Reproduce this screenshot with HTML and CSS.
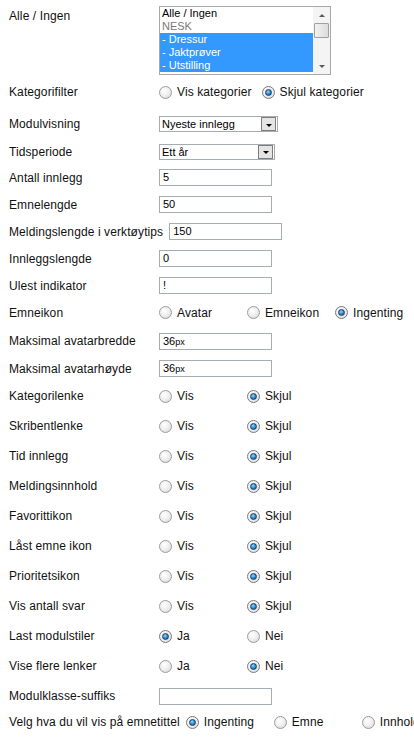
FILE: index.html
```html
<!DOCTYPE html>
<html lang="no">
<head>
<meta charset="utf-8">
<title>Modulinnstillinger</title>
<link rel="stylesheet" href="styles.css">
</head>
<body>
<div class="form">
  <div class="row row-list">
    <div class="label label-top">Alle / Ingen</div>
    <div class="listbox">
      <div class="options">
        <div class="opt">Alle / Ingen</div>
        <div class="opt opt-group">NESK</div>
        <div class="opt opt-sel">- Dressur</div>
        <div class="opt opt-sel">- Jaktprøver</div>
        <div class="opt opt-sel">- Utstilling</div>
      </div>
      <div class="scrollbar">
        <div class="sb-up"></div>
        <div class="sb-thumb"></div>
        <div class="sb-down"></div>
      </div>
    </div>
  </div>

  <div class="row h34">
    <div class="label">Kategorifilter</div>
    <label class="choice"><span class="radio"></span>Vis kategorier</label>
    <label class="choice"><span class="radio checked"></span>Skjul kategorier</label>
  </div>

  <div class="row h30">
    <div class="label">Modulvisning</div>
    <div class="select select-wide"><span class="select-text">Nyeste innlegg</span><span class="select-btn"></span></div>
  </div>

  <div class="row h25">
    <div class="label">Tidsperiode</div>
    <div class="select select-mid"><span class="select-text">Ett år</span><span class="select-btn"></span></div>
  </div>

  <div class="row h27">
    <div class="label">Antall innlegg</div>
    <div class="input">5</div>
  </div>

  <div class="row h27">
    <div class="label">Emnelengde</div>
    <div class="input">50</div>
  </div>

  <div class="row h27">
    <div class="label">Meldingslengde i verktøytips</div>
    <div class="input">150</div>
  </div>

  <div class="row h27">
    <div class="label">Innleggslengde</div>
    <div class="input">0</div>
  </div>

  <div class="row h27">
    <div class="label">Ulest indikator</div>
    <div class="input">!</div>
  </div>

  <div class="row h27">
    <div class="label">Emneikon</div>
    <label class="choice"><span class="radio"></span>Avatar</label>
    <label class="choice"><span class="radio"></span>Emneikon</label>
    <label class="choice"><span class="radio checked"></span>Ingenting</label>
  </div>

  <div class="row h30">
    <div class="label">Maksimal avatarbredde</div>
    <div class="input">36<span class="unit">px</span></div>
  </div>

  <div class="row h25">
    <div class="label">Maksimal avatarhøyde</div>
    <div class="input">36<span class="unit">px</span></div>
  </div>

  <div class="row h30">
    <div class="label">Kategorilenke</div>
    <label class="choice"><span class="radio"></span>Vis</label>
    <label class="choice"><span class="radio checked"></span>Skjul</label>
  </div>
  <div class="row h30">
    <div class="label">Skribentlenke</div>
    <label class="choice"><span class="radio"></span>Vis</label>
    <label class="choice"><span class="radio checked"></span>Skjul</label>
  </div>
  <div class="row h30">
    <div class="label">Tid innlegg</div>
    <label class="choice"><span class="radio"></span>Vis</label>
    <label class="choice"><span class="radio checked"></span>Skjul</label>
  </div>
  <div class="row h30">
    <div class="label">Meldingsinnhold</div>
    <label class="choice"><span class="radio"></span>Vis</label>
    <label class="choice"><span class="radio checked"></span>Skjul</label>
  </div>
  <div class="row h30">
    <div class="label">Favorittikon</div>
    <label class="choice"><span class="radio"></span>Vis</label>
    <label class="choice"><span class="radio checked"></span>Skjul</label>
  </div>
  <div class="row h30">
    <div class="label">Låst emne ikon</div>
    <label class="choice"><span class="radio"></span>Vis</label>
    <label class="choice"><span class="radio checked"></span>Skjul</label>
  </div>
  <div class="row h30">
    <div class="label">Prioritetsikon</div>
    <label class="choice"><span class="radio"></span>Vis</label>
    <label class="choice"><span class="radio checked"></span>Skjul</label>
  </div>
  <div class="row h30">
    <div class="label">Vis antall svar</div>
    <label class="choice"><span class="radio"></span>Vis</label>
    <label class="choice"><span class="radio checked"></span>Skjul</label>
  </div>
  <div class="row h30">
    <div class="label">Last modulstiler</div>
    <label class="choice"><span class="radio checked"></span>Ja</label>
    <label class="choice"><span class="radio"></span>Nei</label>
  </div>
  <div class="row h30">
    <div class="label">Vise flere lenker</div>
    <label class="choice"><span class="radio"></span>Ja</label>
    <label class="choice"><span class="radio checked"></span>Nei</label>
  </div>

  <div class="row h30">
    <div class="label">Modulklasse-suffiks</div>
    <div class="input"></div>
  </div>

  <div class="row h22">
    <div class="label">Velg hva du vil vis på emnetittel</div>
    <label class="choice"><span class="radio checked"></span>Ingenting</label>
    <label class="choice"><span class="radio"></span>Emne</label>
    <label class="choice"><span class="radio"></span>Innhold</label>
  </div>
</div>
</body>
</html>
```

FILE: styles.css
```css
html, body {
  margin: 0;
  padding: 0;
  background: #ffffff;
  overflow: hidden;
}

body {
  font-family: "Liberation Sans", Arial, sans-serif;
  font-size: 12px;
  color: #111111;
}

.form {
  padding: 6px 0 0 9px;
  width: 700px;
}

.row {
  display: flex;
  align-items: center;
  white-space: nowrap;
}

.row-list {
  align-items: flex-start;
  height: 69px;
}

.h34 { height: 34px; }
.h30 { height: 30px; }
.h27 { height: 27px; }
.h25 { height: 25px; }
.h22 { height: 22px; }

.label {
  min-width: 144px;
  padding-right: 6px;
  flex-shrink: 0;
  line-height: 14px;
  letter-spacing: 0.1px;
}

.label-top {
  padding-top: 3px;
}

/* list box */
.listbox {
  display: flex;
  width: 170px;
  height: 67px;
  border: 1px solid #a9a9a9;
  background: #ffffff;
}

.options {
  flex: 1;
  font-size: 11px;
}

.opt {
  height: 13px;
  line-height: 13px;
  padding-left: 2px;
  color: #000000;
}

.opt-group {
  color: #7a7a7a;
}

.opt-sel {
  background: #3399ff;
  color: #ffffff;
}

.scrollbar {
  width: 17px;
  display: flex;
  flex-direction: column;
  align-items: center;
  background: #f4f4f4;
}

.sb-up, .sb-down {
  width: 0;
  height: 0;
  border-left: 3px solid transparent;
  border-right: 3px solid transparent;
}

.sb-up {
  margin-top: 7px;
  border-bottom: 3px solid #5a5a5a;
}

.sb-thumb {
  margin-top: 6px;
  width: 13px;
  height: 13px;
  border: 1px solid #a0a0a0;
  border-radius: 1px;
  background: linear-gradient(to right, #f2f2f2, #dcdcdc);
}

.sb-down {
  margin-top: auto;
  margin-bottom: 6px;
  border-top: 3px solid #5a5a5a;
}

/* selects */
.select {
  display: flex;
  align-items: center;
  height: 14px;
  border: 1px solid #a5acb2;
  background: #ffffff;
  font-size: 11px;
  color: #000000;
  padding: 0 1px 0 2px;
}

.select-wide { width: 114px; }
.select-mid { width: 111px; }

.select-text {
  flex: 1;
}

.select-btn {
  width: 13px;
  height: 12px;
  border: 1px solid #7d7d7d;
  background: #e4e4e4;
  display: flex;
  align-items: center;
  justify-content: center;
}

.select-btn::after {
  content: "";
  width: 0;
  height: 0;
  margin-top: 2px;
  border-left: 3px solid transparent;
  border-right: 3px solid transparent;
  border-top: 3px solid #000000;
}

/* text inputs */
.input {
  width: 108px;
  height: 15px;
  line-height: 15px;
  border: 1px solid #a5acb2;
  background: #ffffff;
  font-size: 11px;
  color: #000000;
  padding-left: 3px;
}

.unit {
  font-size: 9px;
}

/* radios */
.choice {
  display: flex;
  align-items: center;
  min-width: 88px;
  padding-right: 10px;
  box-sizing: border-box;
  flex-shrink: 0;
  letter-spacing: 0.1px;
}

.radio {
  position: relative;
  width: 11px;
  height: 11px;
  border: 1px solid #9c9c9c;
  border-radius: 50%;
  background: radial-gradient(circle at 40% 35%, #ffffff 0%, #ececec 55%, #cfcfcf 100%);
  margin-right: 5px;
  flex-shrink: 0;
}

.radio.checked {
  border-color: #7a7a7a;
}

.radio.checked::after {
  content: "";
  position: absolute;
  left: 2px;
  top: 2px;
  width: 5px;
  height: 5px;
  border-radius: 50%;
  border: 1px solid #1b3e63;
  background: radial-gradient(circle at 40% 35%, #8fd6ff 0%, #2a86cc 55%, #0d4a86 100%);
}
```
